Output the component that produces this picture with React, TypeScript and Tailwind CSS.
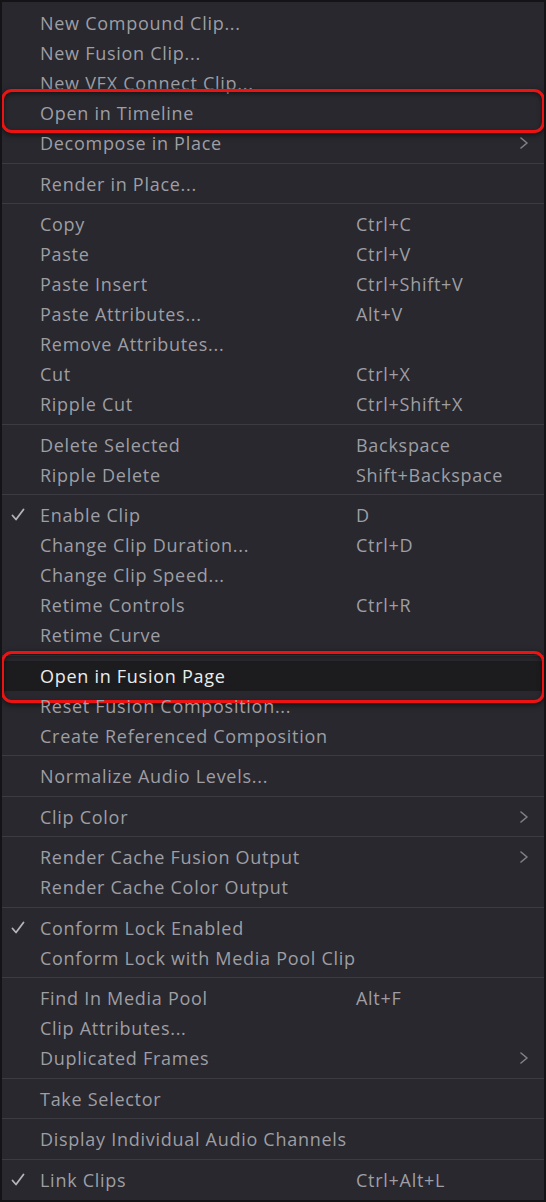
import type { ReactNode } from "react";

type Item = {
  label: string;
  shortcut?: string;
  checked?: boolean;
  submenu?: boolean;
  active?: boolean;
  marked?: boolean;
};

// groups of the context menu, separated by a line
const groups: Item[][] = [
  [
    { label: "New Compound Clip..." },
    { label: "New Fusion Clip..." },
    { label: "New VFX Connect Clip..." },
    { label: "Open in Timeline", marked: true },
    { label: "Decompose in Place", submenu: true },
  ],
  [{ label: "Render in Place..." }],
  [
    { label: "Copy", shortcut: "Ctrl+C" },
    { label: "Paste", shortcut: "Ctrl+V" },
    { label: "Paste Insert", shortcut: "Ctrl+Shift+V" },
    { label: "Paste Attributes...", shortcut: "Alt+V" },
    { label: "Remove Attributes..." },
    { label: "Cut", shortcut: "Ctrl+X" },
    { label: "Ripple Cut", shortcut: "Ctrl+Shift+X" },
  ],
  [
    { label: "Delete Selected", shortcut: "Backspace" },
    { label: "Ripple Delete", shortcut: "Shift+Backspace" },
  ],
  [
    { label: "Enable Clip", shortcut: "D", checked: true },
    { label: "Change Clip Duration...", shortcut: "Ctrl+D" },
    { label: "Change Clip Speed..." },
    { label: "Retime Controls", shortcut: "Ctrl+R" },
    { label: "Retime Curve" },
  ],
  [
    { label: "Open in Fusion Page", active: true, marked: true },
    { label: "Reset Fusion Composition..." },
    { label: "Create Referenced Composition" },
  ],
  [{ label: "Normalize Audio Levels..." }],
  [{ label: "Clip Color", submenu: true }],
  [
    { label: "Render Cache Fusion Output", submenu: true },
    { label: "Render Cache Color Output" },
  ],
  [
    { label: "Conform Lock Enabled", checked: true },
    { label: "Conform Lock with Media Pool Clip" },
  ],
  [
    { label: "Find In Media Pool", shortcut: "Alt+F" },
    { label: "Clip Attributes..." },
    { label: "Duplicated Frames", submenu: true },
  ],
  [{ label: "Take Selector" }],
  [{ label: "Display Individual Audio Channels" }],
  [{ label: "Link Clips", shortcut: "Ctrl+Alt+L", checked: true }],
];

function CheckMark() {
  return (
    <svg width="14" height="14" viewBox="0 0 14 14" fill="none">
      <path d="M1.5 7.5 L5 11.5 L12.5 1.5" stroke="#b4b4b8" strokeWidth="1.8" strokeLinecap="round" strokeLinejoin="round" />
    </svg>
  );
}

function Chevron() {
  return (
    <svg width="10" height="12" viewBox="0 0 10 12" fill="none">
      <path d="M2 1 L8 6 L2 11" stroke="#808086" strokeWidth="1.6" strokeLinecap="round" strokeLinejoin="round" />
    </svg>
  );
}

function Row({ item }: { item: Item }) {
  return (
    <div
      className={
        "relative flex h-[30px] items-center " +
        (item.active ? "bg-[#1c1c1e] text-[#ececec]" : "text-[#9e9ea4]")
      }
    >
      <div className="flex w-[38px] shrink-0 pl-[9px]">
        {item.checked && <CheckMark />}
      </div>
      <span className="w-[316px] shrink-0 whitespace-nowrap">{item.label}</span>
      <span className="whitespace-nowrap">{item.shortcut}</span>
      {item.submenu && (
        <div className="absolute right-[15px] top-[9px]">
          <Chevron />
        </div>
      )}
      {/* red annotation box drawn over the item */}
      {item.marked && <Marker active={item.active} />}
    </div>
  );
}

function Marker({ active }: { active?: boolean }) {
  return (
    <div
      className={
        "pointer-events-none absolute left-[-1px] right-[-1px] rounded-[11px] border-[3px] border-[#ee1313] shadow-[0_2px_6px_rgba(0,0,0,0.55),inset_0_2px_5px_rgba(0,0,0,0.45)] " +
        (active ? "top-[-10px] bottom-[-12px]" : "top-[-9px] bottom-[-5px]")
      }
    />
  );
}

function Separator(): ReactNode {
  return (
    <div className="py-[4.75px]">
      <div className="h-px bg-[#3b3b41]" />
    </div>
  );
}

export default function App() {
  return (
    <div className="h-[1202px] w-[546px] overflow-hidden border-2 border-[#141416] bg-[#28282e] pt-[6px] font-['Open_Sans',sans-serif] text-[18px] leading-none tracking-[0.72px]">
      {groups.map((group, i) => (
        <div key={i}>
          {i > 0 && <Separator />}
          {group.map((item) => (
            <Row key={item.label} item={item} />
          ))}
        </div>
      ))}
    </div>
  );
}
